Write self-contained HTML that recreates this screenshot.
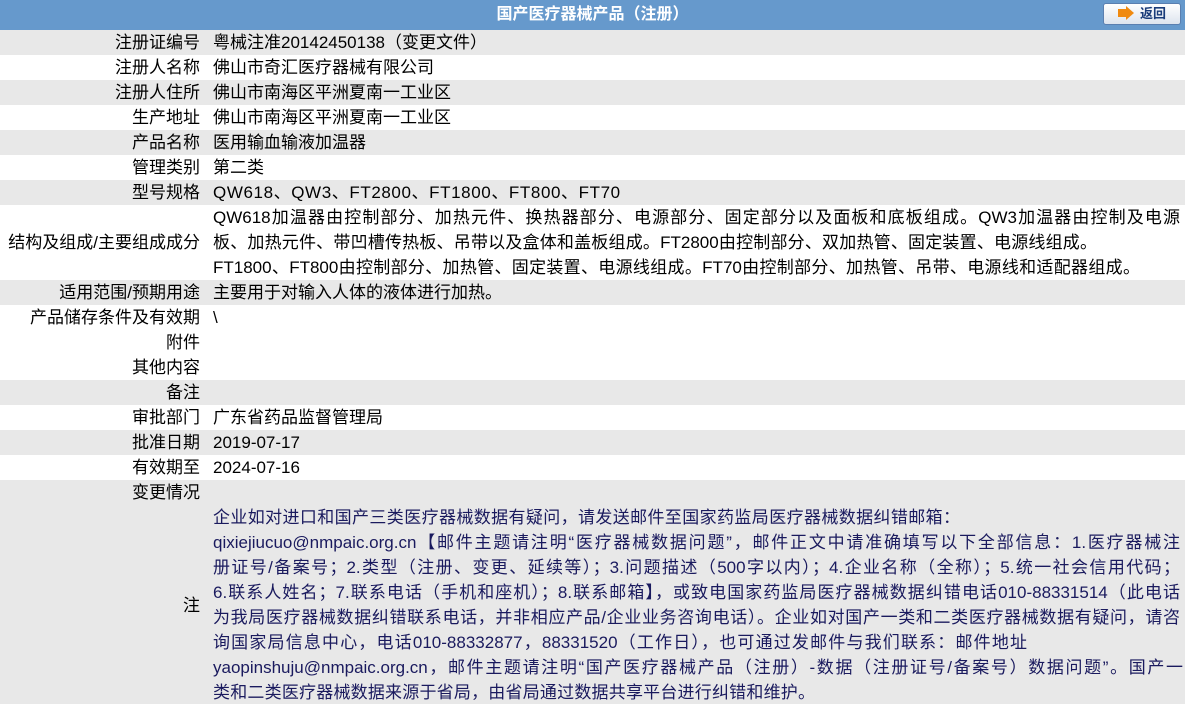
<!DOCTYPE html>
<html><head><meta charset="utf-8"><style>
*{margin:0;padding:0;box-sizing:border-box}
body{width:1185px;height:704px;overflow:hidden;background:#fff;font-family:"Liberation Sans","Noto Sans CJK SC",sans-serif;font-size:17px;color:#000;position:relative}
.hd{position:absolute;left:0;top:0;width:1185px;height:30px;background:#6699cc;color:#fff;font-weight:bold;font-size:16px;text-align:center;line-height:30px}
.btn{position:absolute;left:1103px;top:3px;width:78px;height:22px;background:linear-gradient(#fff,#dde4ee);border:1px solid #5a7fb0;border-radius:3px;color:#1a3c7a;font-size:13px;font-weight:bold;line-height:20px;text-align:left;padding-left:36px}
.btn i{position:absolute;left:14px;top:5px;width:8px;height:8px;background:#f08a10}
.btn b{position:absolute;left:22px;top:2px;width:0;height:0;border-top:7px solid transparent;border-bottom:7px solid transparent;border-left:8px solid #f08a10}
.r{position:absolute;left:0;width:1185px}
.g{background:#e8e8e8}
.l{position:absolute;right:985px;white-space:nowrap;line-height:25px}
.v{position:absolute;left:213px;white-space:nowrap;line-height:25px}
.v span{display:block;white-space:nowrap;text-align:justify;text-align-last:justify;text-justify:inter-character}
.n{color:#1a1a5e}
</style></head><body>
<div class="hd">国产医疗器械产品（注册）</div>
<div class="btn"><i></i><b></b>返回</div>

<div class="r g" style="top:30px;height:25px"><span class="l">注册证编号</span><span class="v">粤械注准20142450138（变更文件）</span></div>
<div class="r" style="top:55px;height:25px"><span class="l">注册人名称</span><span class="v">佛山市奇汇医疗器械有限公司</span></div>
<div class="r g" style="top:80px;height:25px"><span class="l">注册人住所</span><span class="v">佛山市南海区平洲夏南一工业区</span></div>
<div class="r" style="top:105px;height:25px"><span class="l">生产地址</span><span class="v">佛山市南海区平洲夏南一工业区</span></div>
<div class="r g" style="top:130px;height:25px"><span class="l">产品名称</span><span class="v">医用输血输液加温器</span></div>
<div class="r" style="top:155px;height:25px"><span class="l">管理类别</span><span class="v">第二类</span></div>
<div class="r g" style="top:180px;height:25px"><span class="l">型号规格</span><span class="v" style="letter-spacing:0.6px">QW618、QW3、FT2800、FT1800、FT800、FT70</span></div>
<div class="r" style="top:205px;height:75px"><span class="l" style="top:25px">结构及组成/主要组成成分</span><div class="v"><span style="width:967px">QW618加温器由控制部分、加热元件、换热器部分、电源部分、固定部分以及面板和底板组成。QW3加温器由控制及电源</span><span style="width:884px">板、加热元件、带凹槽传热板、吊带以及盒体和盖板组成。FT2800由控制部分、双加热管、固定装置、电源线组成。</span><span style="width:927px">FT1800、FT800由控制部分、加热管、固定装置、电源线组成。FT70由控制部分、加热管、吊带、电源线和适配器组成。</span></div></div>
<div class="r g" style="top:280px;height:25px"><span class="l">适用范围/预期用途</span><span class="v">主要用于对输入人体的液体进行加热。</span></div>
<div class="r" style="top:305px;height:25px"><span class="l">产品储存条件及有效期</span><span class="v">\</span></div>
<div class="r" style="top:330px;height:25px"><span class="l">附件</span></div>
<div class="r" style="top:355px;height:25px"><span class="l">其他内容</span></div>
<div class="r g" style="top:380px;height:25px"><span class="l">备注</span></div>
<div class="r" style="top:405px;height:25px"><span class="l">审批部门</span><span class="v">广东省药品监督管理局</span></div>
<div class="r g" style="top:430px;height:25px"><span class="l">批准日期</span><span class="v">2019-07-17</span></div>
<div class="r" style="top:455px;height:25px"><span class="l">有效期至</span><span class="v">2024-07-16</span></div>
<div class="r g" style="top:480px;height:25px"><span class="l">变更情况</span></div>
<div class="r g" style="top:505px;height:199px"><span class="l" style="top:88px">注</span><div class="v n" style="top:0"><span style="width:747px">企业如对进口和国产三类医疗器械数据有疑问，请发送邮件至国家药监局医疗器械数据纠错邮箱：</span><span style="width:967px">qixiejiucuo@nmpaic.org.cn【邮件主题请注明“医疗器械数据问题”，邮件正文中请准确填写以下全部信息：1.医疗器械注</span><span style="width:967px">册证号/备案号；2.类型（注册、变更、延续等）；3.问题描述（500字以内）；4.企业名称（全称）；5.统一社会信用代码；</span><span style="width:967px">6.联系人姓名；7.联系电话（手机和座机）；8.联系邮箱】，或致电国家药监局医疗器械数据纠错电话010-88331514（此电话</span><span style="width:967px">为我局医疗器械数据纠错联系电话，并非相应产品/企业业务咨询电话）。企业如对国产一类和二类医疗器械数据有疑问，请咨</span><span style="width:814px">询国家局信息中心，电话010-88332877，88331520（工作日），也可通过发邮件与我们联系：邮件地址</span><span style="width:970px">yaopinshuju@nmpaic.org.cn，邮件主题请注明“国产医疗器械产品（注册）-数据（注册证号/备案号）数据问题”。国产一</span><span style="width:602px">类和二类医疗器械数据来源于省局，由省局通过数据共享平台进行纠错和维护。</span></div></div>
</body></html>
